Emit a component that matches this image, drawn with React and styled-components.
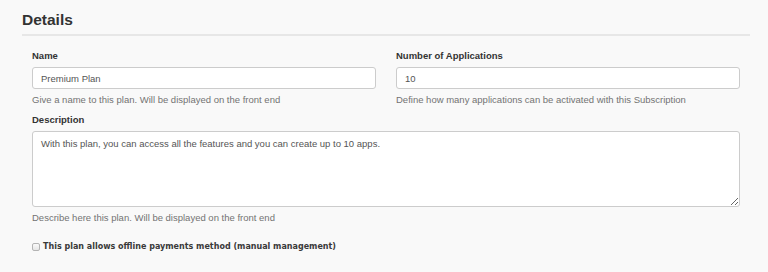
import React from "react"
import styled, { createGlobalStyle } from "styled-components"

const GlobalStyle = createGlobalStyle`
    html, body {
        margin: 0;
        padding: 0;
        background: #f9f9f9;
    }
    body {
        font-family: "Liberation Sans", Arial, sans-serif;
        color: #333;
    }
`

const Page = styled.div`
    width: 768px;
    height: 272px;
    padding: 9px 18px 0 22px;
    box-sizing: border-box;
`

const Title = styled.h3`
    margin: 0;
    font-size: 15.5px;
    font-weight: bold;
    color: #333;
    line-height: 22px;
    padding-bottom: 3px;
    border-bottom: 2px solid #e7e7e7;
`

const Body = styled.div`
    padding: 14px 10px 0 10px;
`

const Row = styled.div`
    display: grid;
    grid-template-columns: ${p => p.cols || "1fr"};
    column-gap: 20px;
`

const Group = styled.div`
    display: flex;
    flex-direction: column;
    margin-bottom: ${p => p.mb || "8px"};
`

const Label = styled.label`
    font-size: 9.5px;
    font-weight: bold;
    color: #333;
    line-height: 12px;
    margin-bottom: 5px;
`

const Input = styled.input`
    box-sizing: border-box;
    height: 22px;
    padding: 0 8px;
    border: 1px solid #ccc;
    border-radius: 3px;
    background: #fff;
    font-family: "Liberation Sans", Arial, sans-serif;
    font-size: 9.5px;
    color: #555;
    outline: none;
`

const TextArea = styled.textarea`
    box-sizing: border-box;
    height: 76px;
    padding: 5px 8px;
    border: 1px solid #ccc;
    border-radius: 3px;
    background: #fff;
    font-family: "Liberation Sans", Arial, sans-serif;
    font-size: 9.5px;
    line-height: 13px;
    color: #555;
    outline: none;
    resize: vertical;
`

const Help = styled.span`
    font-size: 9.5px;
    color: #737373;
    line-height: 12px;
    margin-top: 5px;
`

const CheckRow = styled.label`
    display: flex;
    align-items: center;
    gap: 3px;
    font-family: "DejaVu Sans", sans-serif;
    font-size: 8px;
    font-weight: bold;
    color: #3a3a3a;
    line-height: 12px;
    margin-top: 17px;
`

const Check = styled.input`
    appearance: none;
    margin: 0;
    width: 8px;
    height: 8px;
    box-sizing: border-box;
    border: 1px solid #b4b4b4;
    border-radius: 2px;
    background: linear-gradient(#fafafa, #e6e6e6);
`

const App = () => {
    return (
        <Page>
            <GlobalStyle />
            <Title>Details</Title>
            <Body>
                <Row cols="1fr 1fr">
                    <Group>
                        <Label>Name</Label>
                        <Input defaultValue="Premium Plan" />
                        <Help>Give a name to this plan. Will be displayed on the front end</Help>
                    </Group>
                    <Group>
                        <Label>Number of Applications</Label>
                        <Input defaultValue="10" />
                        <Help>Define how many applications can be activated with this Subscription</Help>
                    </Group>
                </Row>
                <Row>
                    <Group mb="0">
                        <Label>Description</Label>
                        <TextArea defaultValue="With this plan, you can access all the features and you can create up to 10 apps." />
                        <Help>Describe here this plan. Will be displayed on the front end</Help>
                    </Group>
                </Row>
                <CheckRow>
                    <Check type="checkbox" />
                    This plan allows offline payments method (manual management)
                </CheckRow>
            </Body>
        </Page>
    )
}

export default App
